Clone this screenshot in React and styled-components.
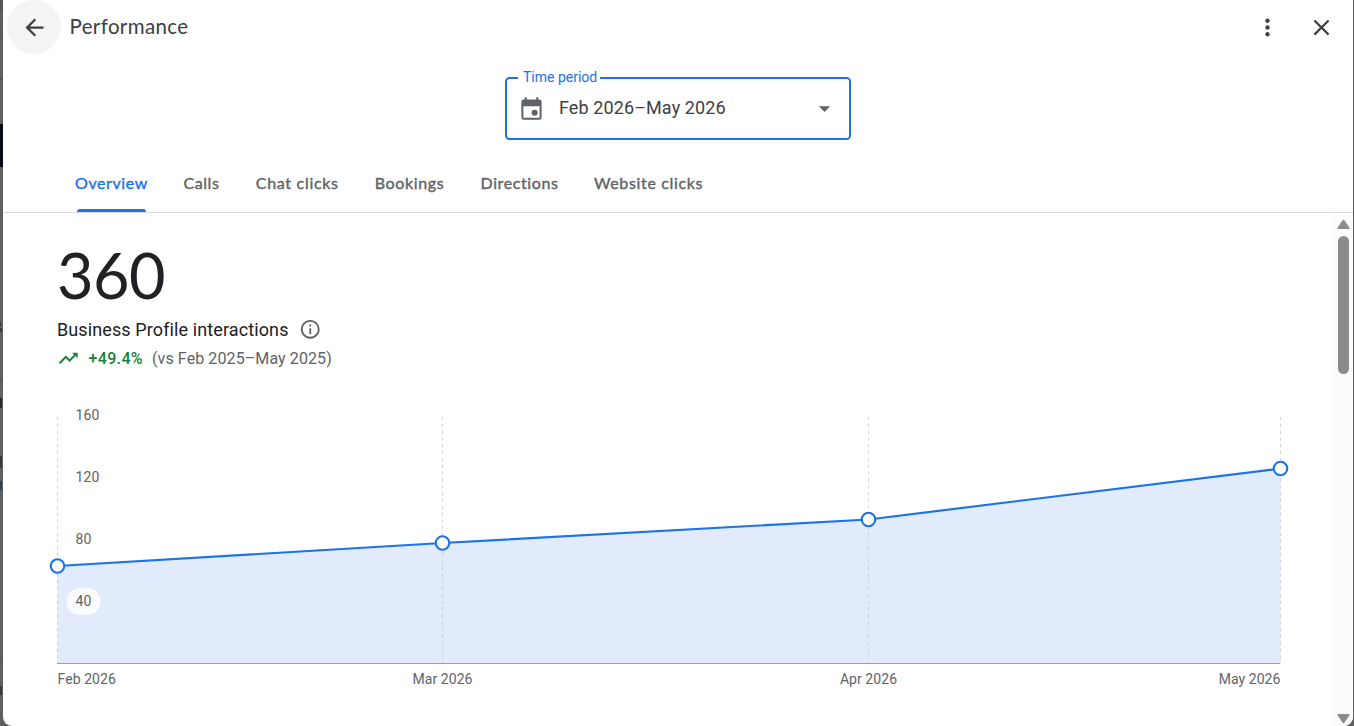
import React from 'react';
import styled, { createGlobalStyle } from 'styled-components';
import { MdArrowBack, MdMoreVert, MdClose, MdArrowDropDown, MdInfoOutline, MdTrendingUp } from 'react-icons/md';

const display = 'Lato, "Liberation Sans", sans-serif';
const body = 'Roboto, "Liberation Sans", sans-serif';

const GlobalStyle = createGlobalStyle`
  * { box-sizing: border-box; }
  html, body, #root { height: 100%; }
  body { margin: 0; overflow: hidden; background: #5f5f5f; font-family: ${body}; }
`;

const Backdrop = styled.div`
  position: relative;
  height: 726px;
  width: 1354px;
  padding: 0 1px 0 3px;
  overflow: hidden;
  background: #5f5f5f;
`;

const Remnant = styled.div`
  position: absolute;
  left: 0;
  top: ${(p) => p.$top}px;
  width: ${(p) => p.$width || 3}px;
  height: ${(p) => p.$height}px;
  background: ${(p) => p.$color};
`;

const Dialog = styled.main`
  position: relative;
  display: flex;
  flex-direction: column;
  height: 734px;
  margin-top: -8px;
  padding-top: 8px;
  border-radius: 9px;
  background: #fff;
  overflow: hidden;
`;

const Header = styled.header`
  display: flex;
  align-items: center;
  height: 54px;
  padding: 0 18px 0 4px;
  color: #3c4043;
`;

const BackButton = styled.button`
  display: grid;
  place-items: center;
  width: 54px;
  height: 54px;
  border: 0;
  padding: 0;
  border-radius: 50%;
  background: #f4f4f4;
  color: #3c4043;
`;

const Title = styled.h1`
  flex: 1;
  margin: 0 0 2px 8.5px;
  font: 400 20.5px/28px ${display};
  letter-spacing: 0.37px;
`;

const IconButton = styled.button`
  display: grid;
  place-items: center;
  width: 27px;
  height: 27px;
  margin-left: 27px;
  border: 0;
  padding: 0;
  background: none;
  color: #3c4043;
`;

const PeriodRow = styled.div`
  display: flex;
  justify-content: center;
  padding: 23px 0 15px;
`;

const PeriodField = styled.div`
  position: relative;
  display: flex;
  align-items: center;
  width: 346px;
  height: 63px;
  padding: 0 11px;
  border: 2px solid #1a73e8;
  border-radius: 4.5px;
  color: #5f6368;
`;

const PeriodLabel = styled.span`
  position: absolute;
  left: 11px;
  top: -12px;
  width: 82px;
  padding-left: 5px;
  background: #fff;
  color: #1a73e8;
  font: 400 14px/20px ${body};
  white-space: nowrap;
`;

const PeriodValue = styled.span`
  flex: 1;
  margin: 0 0 2px 14px;
  color: #3c4043;
  font: 400 18px/27px ${body};
  letter-spacing: 0.1px;
`;

const Tabs = styled.nav`
  display: flex;
  gap: 36.4px;
  height: 58px;
  padding-left: 72px;
  border-bottom: 1px solid #dadce0;
`;

const Tab = styled.a`
  display: flex;
  flex-direction: column;
  justify-content: space-between;
  width: ${(p) => p.$width}px;
  padding-top: 16px;
  color: ${(p) => (p.$active ? '#1a73e8' : '#5f6368')};
  font: 400 16px/24px ${display};
  -webkit-text-stroke: 0.4px currentColor;
  letter-spacing: ${(p) => p.$spacing}px;
  white-space: nowrap;
  &::after {
    content: '';
    height: 3px;
    margin: 0 1.5px;
    border-radius: 3px 3px 0 0;
    background: ${(p) => (p.$active ? '#1a73e8' : 'transparent')};
  }
`;

const ScrollPane = styled.div`
  display: flex;
  flex: 1;
  min-height: 0;
`;

const Content = styled.section`
  flex: 1;
  padding: 22px 0 0 54px;
`;

const Total = styled.div`
  height: 79px;
  color: #202124;
  font: 400 63px/80px ${display};
  letter-spacing: -0.5px;
`;

const Summary = styled.div`
  display: flex;
  align-items: center;
  gap: 10px;
  height: 31px;
  color: #202124;
  font: 400 18px/27px ${body};
  letter-spacing: 0.11px;
  svg { color: #5f6368; }
`;

const Trend = styled.div`
  display: flex;
  align-items: center;
  height: 27px;
  color: #5f6368;
  font: 400 16px/24px ${body};
  letter-spacing: 0.1px;
  svg { color: #188038; }
`;

const Change = styled.strong`
  margin: 0 9px;
  color: #188038;
  font-weight: 500;
  letter-spacing: 0.35px;
`;

const Chart = styled.svg`
  display: block;
  margin: 28px 0 0 -14px;
  text { font: 400 14px ${body}; fill: #5f6368; letter-spacing: 0.07px; }
`;

const Scrollbar = styled.div`
  display: flex;
  flex-direction: column;
  align-items: center;
  justify-content: space-between;
  width: 19px;
  padding: 6px 0 2px;
  background: #fcfcfc;
`;

const Thumb = styled.div`
  width: 11px;
  height: 138px;
  margin: 6px 0 auto;
  border-radius: 6px;
  background: #8b8b8b;
`;

const CalendarIcon = () => (
  <svg width="27" height="27" viewBox="0 0 24 24" fill="currentColor">
    <path fillRule="evenodd" d="M6 2h1.8v2h8.4V2H18v2h1a2 2 0 0 1 2 2v14a2 2 0 0 1-2 2H5a2 2 0 0 1-2-2V6a2 2 0 0 1 2-2h1V2Zm-1.2 8v10.2h14.4V10H4.8Z" />
    <circle cx="14.8" cy="15.7" r="2.7" />
  </svg>
);

const Arrow = ({ down }) => (
  <svg width="13" height="11" viewBox="0 0 13 11" fill="#8b8b8b">
    <path d={down ? 'M1 1h11q1 .3.5 1.2L7.5 9.6q-1 1.2-2 0L.5 2.2Q0 1.3 1 1Z' : 'M1 10h11q1-.3.5-1.2L7.5 1.4q-1-1.2-2 0L.5 8.8Q0 9.7 1 10Z'} />
  </svg>
);

const tabs = [
  { name: 'Overview', width: 72, spacing: 0.6, active: true },
  { name: 'Calls', width: 36, spacing: 0.6 },
  { name: 'Chat clicks', width: 82.5, spacing: 0.7 },
  { name: 'Bookings', width: 69.5, spacing: 0.65 },
  { name: 'Directions', width: 77, spacing: 0.6 },
  { name: 'Website clicks', width: 108, spacing: 0.65 },
];

const points = [
  { x: 57.5, y: 566, label: 'Feb 2026', anchor: 'start' },
  { x: 442.5, y: 543, label: 'Mar 2026', anchor: 'middle' },
  { x: 868.5, y: 519.5, label: 'Apr 2026', anchor: 'middle' },
  { x: 1280.5, y: 468.5, label: 'May 2026', anchor: 'end' },
];
const line = points.map((p) => `${p.x},${p.y}`).join(' ');

function InteractionsChart() {
  return (
    <Chart width="1253" height="300" viewBox="43 400 1253 300">
      <polygon points={`57.5,663.5 ${line} 1280.5,663.5`} fill="#e2ebfc" />
      {points.map((p) => (
        <line key={p.x} x1={p.x} x2={p.x} y1="417" y2="663" stroke="#bdc1c6" strokeOpacity=".65" strokeDasharray="3.4 3.4" />
      ))}
      <line x1="57" x2="1280" y1="663.5" y2="663.5" stroke="#9aa0a6" />
      <polyline points={line} fill="none" stroke="#1a73e8" strokeWidth="2.2" />
      {points.map((p) => (
        <circle key={p.x} cx={p.x} cy={p.y} r="6.75" fill="#fff" stroke="#1a73e8" strokeWidth="2.1" />
      ))}
      <rect x="66.5" y="588" width="34" height="27" rx="13.5" fill="#fff" fillOpacity=".8" />
      <text x="75.5" y="420">160</text>
      <text x="75.5" y="482">120</text>
      <text x="75.5" y="544">80</text>
      <text x="75.5" y="606">40</text>
      {points.map((p) => (
        <text key={p.label} x={p.x} y="684" textAnchor={p.anchor}>{p.label}</text>
      ))}
    </Chart>
  );
}

export default function App() {
  return (
    <>
      <GlobalStyle />
      <Backdrop>
        <Remnant $top={0} $height={11} $color="#555" />
        <Remnant $top={79} $height={1} $color="#505050" />
        <Remnant $top={124} $height={43} $color="#080b12" />
        <Remnant $top={323} $height={3} $width={1} $color="#333" />
        <Remnant $top={328} $height={4} $width={2} $color="#393939" />
        <Remnant $top={379} $height={1} $color="#505050" />
        <Remnant $top={398} $height={10} $width={2} $color="#292a34" />
        <Remnant $top={456} $height={12} $width={2} $color="#3d3732" />
        <Remnant $top={481} $height={9} $width={2} $color="#303c50" />
        <Remnant $top={661} $height={1} $color="#505050" />
        <Remnant $top={686} $height={9} $width={2} $color="#3a3a3a" />
        <Dialog>
          <Header>
            <BackButton aria-label="Back"><MdArrowBack size={27} /></BackButton>
            <Title>Performance</Title>
            <IconButton aria-label="More options"><MdMoreVert size={27} /></IconButton>
            <IconButton aria-label="Close"><MdClose size={27} /></IconButton>
          </Header>
          <PeriodRow>
            <PeriodField>
              <PeriodLabel>Time period</PeriodLabel>
              <CalendarIcon />
              <PeriodValue>Feb 2026–May 2026</PeriodValue>
              <MdArrowDropDown size={27} />
            </PeriodField>
          </PeriodRow>
          <Tabs>
            {tabs.map((t) => (
              <Tab key={t.name} $width={t.width} $spacing={t.spacing} $active={t.active}>{t.name}</Tab>
            ))}
          </Tabs>
          <ScrollPane>
            <Content>
              <Total>360</Total>
              <Summary>Business Profile interactions <MdInfoOutline size={22.5} /></Summary>
              <Trend>
                <MdTrendingUp size={22.5} />
                <Change>+49.4%</Change>
                (vs Feb 2025–May 2025)
              </Trend>
              <InteractionsChart />
            </Content>
            <Scrollbar>
              <Arrow />
              <Thumb />
              <Arrow down />
            </Scrollbar>
          </ScrollPane>
        </Dialog>
      </Backdrop>
    </>
  );
}
